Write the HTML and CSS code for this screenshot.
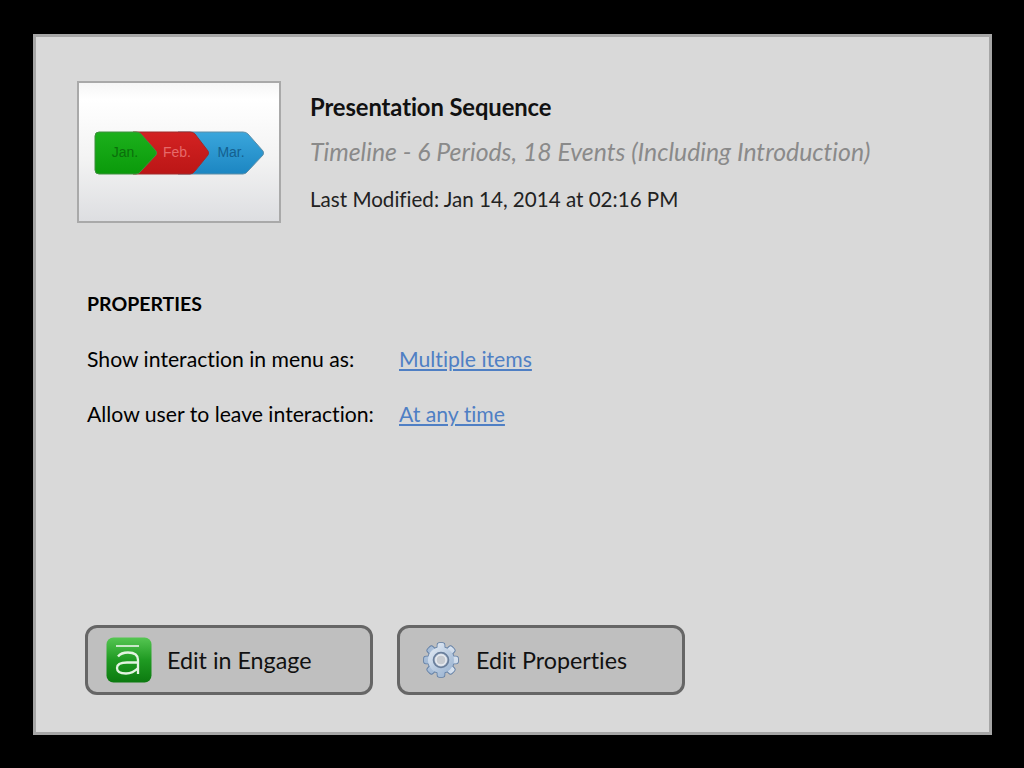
FILE: index.html
```html
<!DOCTYPE html>
<html lang="en">
<head>
<meta charset="utf-8">
<title>Presentation Sequence</title>
<link rel="stylesheet" href="styles.css">
</head>
<body>
<main class="panel">
  <header class="head">
    <div class="thumb">
      <svg class="thumb-art" width="172" height="46" viewBox="0 0 172 46">
        <defs>
          <linearGradient id="gb" x1="0" y1="0" x2="0" y2="1"><stop offset="0" stop-color="#3aa6dc"/><stop offset="1" stop-color="#1c86c2"/></linearGradient>
          <linearGradient id="gr" x1="0" y1="0" x2="0" y2="1"><stop offset="0" stop-color="#d32222"/><stop offset="1" stop-color="#bb1616"/></linearGradient>
          <linearGradient id="gg" x1="0" y1="0" x2="0" y2="1"><stop offset="0" stop-color="#1cb01c"/><stop offset="1" stop-color="#0a9a0a"/></linearGradient>
        </defs>
        <path d="M85 2H150Q153 2 155 4L170 21Q171 23 170 25L155 41Q153 44 150 44H85Z" fill="url(#gb)" stroke="#5d8ea8" stroke-width="1"/>
        <path d="M40 2H97Q100 2 102 4L115 21Q116 23 115 25L102 41Q100 44 97 44H40Z" fill="url(#gr)" stroke="#a02a2a" stroke-width="1"/>
        <path d="M6 2H43Q46 2 48 4L63 21Q64 23 63 25L48 41Q46 44 43 44H6Q2 44 2 40V6Q2 2 6 2Z" fill="url(#gg)" stroke="#3f8f3f" stroke-width="1"/>
        <text class="art-label art-g" x="32" y="27" text-anchor="middle">Jan.</text>
        <text class="art-label art-r" x="84" y="27" text-anchor="middle">Feb.</text>
        <text class="art-label art-b" x="138" y="27" text-anchor="middle">Mar.</text>
      </svg>
    </div>
    <div class="meta">
      <h1 class="title">Presentation Sequence</h1>
      <p class="subtitle">Timeline - 6 Periods, 18 Events (Including Introduction)</p>
      <p class="modified">Last Modified: Jan 14, 2014 at 02:16 PM</p>
    </div>
  </header>

  <section class="props">
    <h2 class="props-title">PROPERTIES</h2>
    <div class="props-grid">
      <span>Show interaction in menu as:</span><a class="link" href="#">Multiple items</a>
      <span>Allow user to leave interaction:</span><a class="link" href="#">At any time</a>
    </div>
  </section>

  <div class="actions">
    <button class="btn" type="button">
      <svg class="btn-icon" width="46" height="46" viewBox="0 0 46 46">
        <defs>
          <linearGradient id="ga" x1="0" y1="0" x2="0" y2="1"><stop offset="0" stop-color="#55c652"/><stop offset="0.5" stop-color="#1f9a22"/><stop offset="1" stop-color="#0c7a10"/></linearGradient>
        </defs>
        <rect x="0.5" y="0.5" width="45" height="45" rx="7" fill="url(#ga)"/>
        <path d="M10 9H33" stroke="#d8eed8" stroke-width="1.8" fill="none"/>
        <path d="M12 19.5Q15 15.5 22 15.5Q32 15.5 32 23V37M32 25.5H21Q11 25.5 11 31Q11 36.5 20 36.5Q27 36.5 32 31" stroke="#e4f4e2" stroke-width="2.3" fill="none"/>
      </svg>
      <span class="btn-label">Edit in Engage</span>
    </button>
    <button class="btn btn-gear" type="button">
      <svg class="btn-icon" width="36" height="36" viewBox="0 0 36 36">
        <defs>
          <linearGradient id="gs" gradientUnits="userSpaceOnUse" x1="4" y1="4" x2="32" y2="32"><stop offset="0" stop-color="#e6edf6"/><stop offset="1" stop-color="#93aece"/></linearGradient>
          <g id="teeth">
            <rect x="14.5" y="1" width="7" height="34" rx="2"/>
            <rect x="14.5" y="1" width="7" height="34" rx="2" transform="rotate(45 18 18)"/>
            <rect x="14.5" y="1" width="7" height="34" rx="2" transform="rotate(90 18 18)"/>
            <rect x="14.5" y="1" width="7" height="34" rx="2" transform="rotate(135 18 18)"/>
            <circle cx="18" cy="18" r="13"/>
          </g>
        </defs>
        <use href="#teeth" fill="#5f7da4" stroke="#5f7da4" stroke-width="1.6"/>
        <use href="#teeth" fill="url(#gs)"/>
        <circle cx="18" cy="18" r="7.4" fill="#d3dae4" stroke="#6a7f9c" stroke-width="1.8"/>
        <circle cx="18" cy="18" r="5" fill="#c6cad0" stroke="#f0f3f8" stroke-width="1"/>
      </svg>
      <span class="btn-label">Edit Properties</span>
    </button>
  </div>
</main>
</body>
</html>
```
FILE: styles.css
```css
* { box-sizing: border-box; }
html, body { margin: 0; height: 100%; }
body {
  background: #000;
  padding: 34px 32px 33px 33px;
  font-family: Lato, "Liberation Sans", sans-serif;
  font-variant-ligatures: none;
  color: #000;
}
.panel {
  height: 701px;
  background: #d9d9d9;
  border: 3px solid #a6a6a6;
  padding: 44px 40px 37px 41px;
  display: flex;
  flex-direction: column;
}
.head { display: flex; gap: 29px; }
.thumb {
  width: 204px;
  height: 142px;
  border: 2px solid #a9a9a9;
  background: linear-gradient(#f6f6f6 0%, #ffffff 12%, #f3f3f3 55%, #dddee1 100%);
  display: flex;
  align-items: center;
  justify-content: center;
  flex: none;
}
.thumb-art { display: block; margin-top: 2px; }
.art-label { font: 14px "Liberation Sans", sans-serif; }
.art-g { fill: #0b6f0b; }
.art-r { fill: #e66a6a; }
.art-b { fill: #14608f; }
.meta { padding-top: 12px; }
.title { margin: 0; font-size: 23.8px; line-height: 28px; font-weight: 700; color: #111; letter-spacing: -0.1px; }
.subtitle { margin: 17px 0 0; font-size: 24.8px; line-height: 28px; font-style: italic; color: #8a8a8a; }
.modified { margin: 21px 0 0; font-size: 20.6px; line-height: 24px; color: #222; }
.props { margin: 69px 0 0 10px; font-size: 21.2px; line-height: 24px; }
.props-title { margin: 0 0 31px; font-size: 19.5px; line-height: 24px; font-weight: 700; }
.props-grid { display: grid; grid-template-columns: 312px auto; row-gap: 31px; justify-content: start; }
.link { color: #4f7fc4; text-decoration: underline; }
.actions { margin-top: auto; margin-left: 8px; display: flex; gap: 24px; }
.btn {
  width: 288px;
  height: 70px;
  border: 3px solid #666;
  border-radius: 12px;
  background: #bfbfbf;
  padding: 0 0 0 18px;
  display: flex;
  align-items: center;
  gap: 15px;
  font: inherit;
  font-variant-ligatures: none;
  color: #111;
  cursor: pointer;
}
.btn-gear { padding-left: 23px; gap: 17px; }
.btn-icon { display: block; flex: none; }
.btn-label { font-size: 23.3px; line-height: 30px; }
```
